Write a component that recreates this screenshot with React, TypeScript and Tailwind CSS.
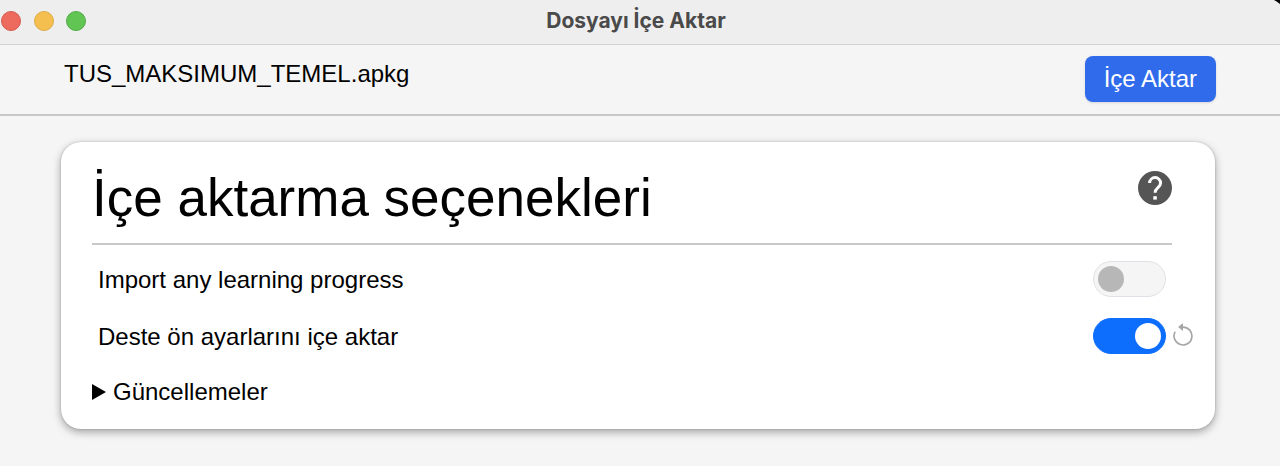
import { useState } from "react";
import { BsArrowCounterclockwise } from "react-icons/bs";

type SwitchProps = {
  id: string;
  checked: boolean;
  onChange: (checked: boolean) => void;
};

function Switch({ id, checked, onChange }: SwitchProps) {
  return (
    <input
      id={id}
      type="checkbox"
      role="switch"
      checked={checked}
      onChange={(e) => onChange(e.target.checked)}
      className="flex h-9 w-[73px] shrink-0 cursor-pointer appearance-none items-center rounded-full border border-[#dee2e6] bg-[#f5f5f5] px-1 before:size-[26px] before:rounded-full before:bg-[#b7b7b7] before:content-[''] checked:justify-end checked:border-[#0d6efd] checked:bg-[#0d6efd] checked:before:bg-white"
    />
  );
}

function HelpIcon() {
  return (
    <svg className="size-[34px]" viewBox="0 0 34 34" fill="none">
      <circle cx="17" cy="17" r="17" fill="#555" />
      <path
        d="M11.6 12.1a5.5 5.5 0 0 1 11 0c0 4.4-5.5 4.9-5.5 9.6"
        stroke="#fff"
        strokeWidth="3"
      />
      <path d="M15.3 25.2h3.5v3.4h-3.5z" fill="#fff" />
    </svg>
  );
}

export default function App() {
  const [progress, setProgress] = useState(false);
  const [presets, setPresets] = useState(true);

  return (
    <div className="min-h-screen bg-[#f5f5f5] font-['Liberation_Sans',Arial,sans-serif] text-2xl text-black">
      <header className="relative flex h-[45px] items-center border-b border-[#d2d2d2] bg-[#eeeeee] pb-[2px]">
        <div className="absolute left-px flex w-[85px] justify-between">
          <button aria-label="Kapat" className="size-[20px] rounded-full border border-[#d9584d] bg-[#ed6a5e]" />
          <button aria-label="Küçült" className="size-[20px] rounded-full border border-[#dcab46] bg-[#f5bf4f]" />
          <button aria-label="Büyüt" className="size-[20px] rounded-full border border-[#54ab46] bg-[#61c554]" />
        </div>
        <h1 className="flex-1 pr-2 text-center font-[Inter,sans-serif] text-[21px] leading-7 font-bold text-[#4a4a4a]">
          Dosyayı İçe Aktar
        </h1>
        <svg className="absolute top-0 right-0 h-1 w-[6px]" viewBox="0 0 6 4">
          <path d="M0 0h6v4Q3 1.5 0 0z" fill="#000" />
        </svg>
      </header>

      <div className="flex items-start justify-between border-b-2 border-[#c8c8c8] px-16 pt-[11px] pb-3">
        <p className="leading-9">TUS_MAKSIMUM_TEMEL.apkg</p>
        <button className="h-[46px] rounded-lg bg-[#306bec] px-[19px] text-white shadow-sm">İçe Aktar</button>
      </div>

      <main className="py-[26px] pr-[65px] pl-[61px]">
        <section className="rounded-[20px] bg-white px-[31px] pt-6 pb-[21px] shadow-[0_0_2px_rgba(0,0,0,0.2),0_3px_8px_rgba(0,0,0,0.35)]">
          <div className="mr-3 flex items-start justify-between border-b-2 border-[#c8c8c8] pb-[13px]">
            <h2 className="text-[53px] leading-16">İçe aktarma seçenekleri</h2>
            <button aria-label="Yardım" className="pt-[5px]">
              <HelpIcon />
            </button>
          </div>

          <div className="flex items-center pt-4 pl-[6px]">
            <label htmlFor="progress" className="flex-1 pt-[2px]">
              Import any learning progress
            </label>
            <Switch id="progress" checked={progress} onChange={setProgress} />
            <span className="ml-1 w-[14px]" />
          </div>

          <div className="flex items-center pt-[21px] pl-[6px]">
            <label htmlFor="presets" className="flex-1 pt-[2px]">
              Deste ön ayarlarını içe aktar
            </label>
            <Switch id="presets" checked={presets} onChange={setPresets} />
            <button
              aria-label="Sıfırla"
              onClick={() => setPresets(true)}
              className="-mr-3 ml-1 text-[26px] text-[#a5a5a5]"
            >
              <BsArrowCounterclockwise />
            </button>
          </div>

          <details className="group pt-[22px]">
            <summary className="flex cursor-pointer list-none items-center gap-[7px]">
              <svg className="h-4 w-[14px] group-open:rotate-90" viewBox="0 0 14 16">
                <path d="M0 0l14 8-14 8z" fill="currentColor" />
              </svg>
              Güncellemeler
            </summary>
          </details>
        </section>
      </main>
    </div>
  );
}
